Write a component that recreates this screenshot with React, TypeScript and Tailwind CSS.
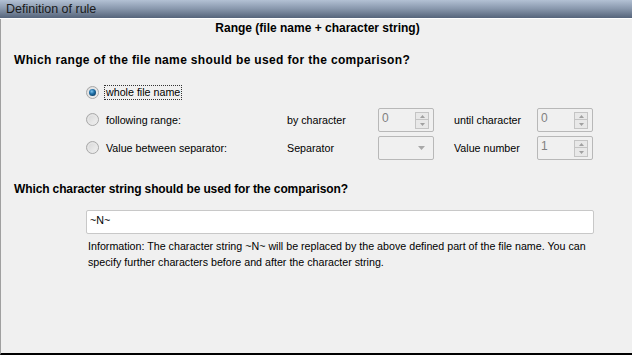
import React from "react";

const font = { fontFamily: '"Liberation Sans", Arial, sans-serif' };

function Radio({ checked }: { checked?: boolean }) {
  return (
    <svg width="13" height="13" viewBox="0 0 13 13" className="shrink-0">
      <defs>
        <linearGradient id={checked ? "rb1" : "rb0"} x1="0" y1="0" x2="1" y2="1">
          <stop offset="0" stopColor="#d4d4d4" />
          <stop offset="1" stopColor="#f4f4f4" />
        </linearGradient>
        <radialGradient id="dot" cx="0.4" cy="0.35" r="0.7">
          <stop offset="0" stopColor="#7fc4ee" />
          <stop offset="0.5" stopColor="#1f70a8" />
          <stop offset="1" stopColor="#0c3f66" />
        </radialGradient>
      </defs>
      <circle cx="6.5" cy="6.5" r="6" fill={`url(#${checked ? "rb1" : "rb0"})`} stroke="#a8a8a8" strokeWidth="1" />
      <circle cx="6.5" cy="6.5" r="4.5" fill="none" stroke="#e8e8e8" strokeWidth="1" />
      {checked && <circle cx="6.5" cy="6.5" r="3.5" fill="url(#dot)" />}
    </svg>
  );
}

function Spin({ value }: { value: string }) {
  return (
    <div className="w-[56px] h-[24px] border border-[#b8b8b8] rounded-[2px] bg-[#f0f0f0] flex items-start justify-between pl-[3px] pr-[4px] pt-[1px]">
      <span className="text-[12px] leading-[16px] text-[#808080]">{value}</span>
      <div className="flex flex-col mt-[2px]">
        <div className="w-[14px] h-[8px] border border-[#c4c4c4] bg-[#e8e8e8] flex items-center justify-center">
          <svg width="5" height="3" viewBox="0 0 5 3"><path d="M0 3 L2.5 0 L5 3Z" fill="#a0a0a0" /></svg>
        </div>
        <div className="w-[14px] h-[9px] border border-t-0 border-[#c4c4c4] bg-[#e8e8e8] flex items-center justify-center">
          <svg width="5" height="3" viewBox="0 0 5 3"><path d="M0 0 L2.5 3 L5 0Z" fill="#a0a0a0" /></svg>
        </div>
      </div>
    </div>
  );
}

function Combo() {
  return (
    <div className="w-[56px] h-[24px] border border-[#b8b8b8] rounded-[2px] bg-[#f0f0f0] flex items-center justify-end pr-[8px]">
      <svg width="7" height="4" viewBox="0 0 7 4"><path d="M0 0 L3.5 4 L7 0Z" fill="#a8a8a8" /></svg>
    </div>
  );
}

export default function App() {
  return (
    <div style={font} className="w-[632px] h-[355px] bg-[#f0f0f0] text-black flex flex-col overflow-hidden">
      <div className="h-[19px] shrink-0 bg-gradient-to-b from-[#b3c1d4] via-[#8796ab] to-[#56657b] flex items-center pl-[6px] text-[12.5px] text-[#1a1a1a] border-b border-white">
        Definition of rule
      </div>
      <div className="flex-1 flex flex-col border-l border-[#a0a0a0] border-b-2 border-b-black">
        <div className="text-center font-bold text-[12px] leading-[14px] mt-[2px] pl-[2px]">Range (file name + character string)</div>
        <div className="font-bold text-[12px] leading-[14px] mt-[18px] ml-[13px] tracking-[0.35px]">Which range of the file name should be used for the comparison?</div>

        <div className="mt-[11px] ml-[85px] grid grid-cols-[201px_91px_76px_83px_auto] grid-rows-[28px_28px_28px] items-center text-[10.7px]">
          <div className="flex items-center col-span-5">
            <Radio checked />
            <span className="ml-[5px] px-[1px] border border-dotted border-[#333] leading-[13px]">whole file name</span>
          </div>

          <div className="flex items-center">
            <Radio />
            <span className="ml-[7px]">following range:</span>
          </div>
          <div>by character</div>
          <div className="flex items-center"><Spin value="0" /></div>
          <div>until character</div>
          <div className="flex items-center"><Spin value="0" /></div>

          <div className="flex items-center">
            <Radio />
            <span className="ml-[7px]">Value between separator:</span>
          </div>
          <div>Separator</div>
          <div className="flex items-center"><Combo /></div>
          <div>Value number</div>
          <div className="flex items-center"><Spin value="1" /></div>
        </div>

        <div className="font-bold text-[12px] leading-[14px] mt-[20px] ml-[13px] tracking-[-0.12px]">Which character string should be used for the comparison?</div>

        <div className="mt-[14px] ml-[85px] w-[508px] h-[24px] bg-white border border-[#c8c8c8] rounded-[2px] text-[10.7px] pl-[3px] pt-[3px] leading-[13px]">~N~</div>

        <div className="mt-[4px] ml-[87px] w-[510px] text-[10.7px] leading-[16px]">
          Information: The character string ~N~ will be replaced by the above defined part of the file name. You can specify further characters before and after the character string.
        </div>
      </div>
    </div>
  );
}
